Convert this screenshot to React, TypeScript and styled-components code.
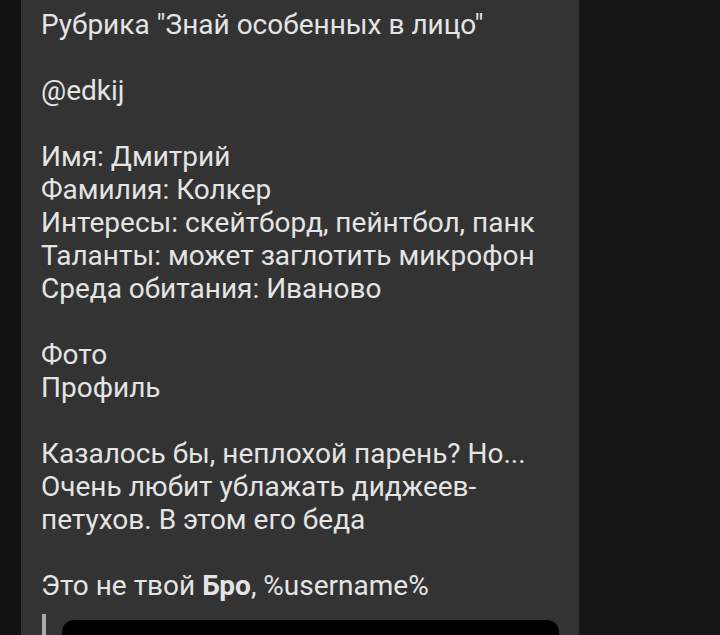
import React from "react";
import styled, { createGlobalStyle } from "styled-components";

const Global = createGlobalStyle`
  html, body { margin: 0; padding: 0; background: #161616; height: 100%; overflow: hidden; }
  #root { height: 100%; }
`;

const Page = styled.div`
  display: flex;
  height: 635px;
  background: #161616;
`;

const LeftStrip = styled.div`
  width: 21px;
  flex: none;
  background: #111111;
`;

const Bubble = styled.div`
  width: 558px;
  flex: none;
  background: #333333;
  padding: 8px 20px 0 20px;
  box-sizing: border-box;
  font-family: Roboto, "Noto Sans", sans-serif;
  font-size: 28px;
  line-height: 33px;
  color: #e4e4e4;
  overflow: hidden;
`;

const Paragraph = styled.p`
  margin: 0 0 33px 0;
  width: 518px;
`;

const Line = styled.div``;

const Quote = styled.div`
  display: flex;
  gap: 16px;
  margin-top: -21px;
  margin-left: 1px;
`;

const QuoteBar = styled.div`
  width: 4px;
  flex: none;
  background: #a8a8a8;
  height: 40px;
`;

const Media = styled.div`
  margin-top: 6px;
  width: 497px;
  height: 80px;
  background: #000000;
  border-radius: 12px;
`;

const Filler = styled.div`
  flex: 1;
`;

export default function App() {
  return (
    <Page>
      <Global />
      <LeftStrip />
      <Bubble>
        <Paragraph>Рубрика "Знай особенных в лицо"</Paragraph>
        <Paragraph>@edkij</Paragraph>
        <Paragraph>
          <Line>Имя: Дмитрий</Line>
          <Line>Фамилия: Колкер</Line>
          <Line>Интересы: скейтборд, пейнтбол, панк</Line>
          <Line>Таланты: может заглотить микрофон</Line>
          <Line>Среда обитания: Иваново</Line>
        </Paragraph>
        <Paragraph>
          <Line>Фото</Line>
          <Line>Профиль</Line>
        </Paragraph>
        <Paragraph>
          Казалось бы, неплохой парень? Но... Очень любит ублажать диджеев-петухов. В этом его беда
        </Paragraph>
        <Paragraph>
          <span>Это не твой </span>
          <b>Бро</b>
          <span>, %username%</span>
        </Paragraph>
        <Quote>
          <QuoteBar />
          <Media />
        </Quote>
      </Bubble>
      <Filler />
    </Page>
  );
}
